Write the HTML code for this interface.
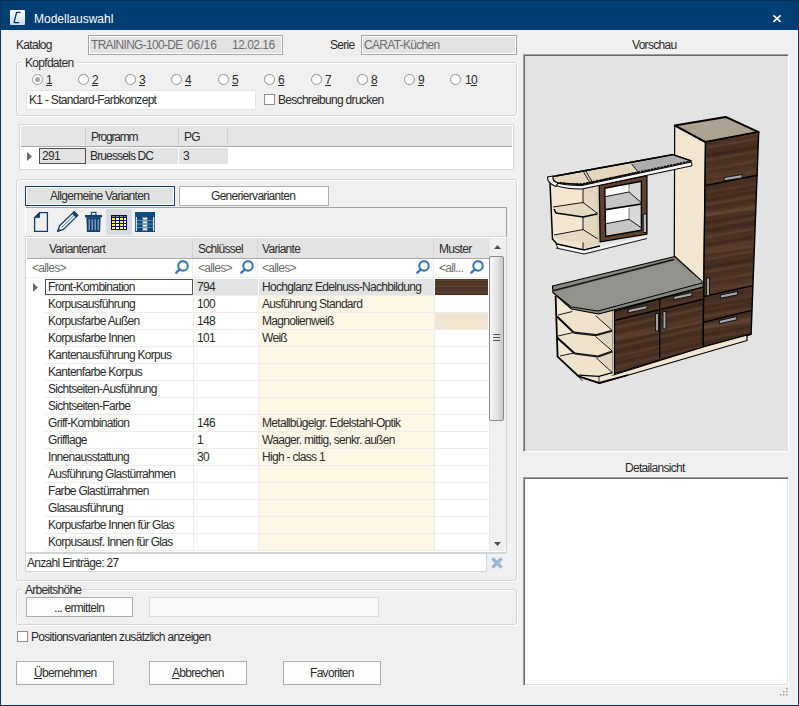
<!DOCTYPE html>
<html><head><meta charset="utf-8">
<style>
html,body{margin:0;padding:0}
body{width:799px;height:706px;overflow:hidden;background:#F0F0F0;position:relative;font-family:"Liberation Sans",sans-serif;font-size:11px;color:#2A2A2A}
div{position:absolute;box-sizing:border-box}
.t{white-space:nowrap;line-height:15px;letter-spacing:-0.7px;font-size:12px}
.g{color:#6D6D6D}
.u{text-decoration:underline}
.box3{background:#E3E3E3;border:1px solid #A5A5A5;box-shadow:inset 0 0 0 1px #fff}
.grp{border:1px solid #D5D5D5;border-radius:3px;box-shadow:inset 1px 1px 0 #fff, 1px 1px 0 #fff}
.radio{width:11px;height:11px;border:1px solid #8F8F8F;border-radius:50%;background:#fff}
.chk{width:11px;height:11px;border:1px solid #8F8F8F;background:#fff}
.btn{background:#FDFDFD;border:1px solid #ADADAD}
</style></head><body>
<!-- window frame -->
<div style="left:0;top:0;width:799px;height:30px;background:#013E74"></div>
<div style="left:0;top:0;width:799px;height:1px;background:#07304F"></div>
<div style="left:0;top:0;width:1px;height:706px;background:#0A3360"></div>
<div style="left:798px;top:0;width:1px;height:706px;background:#0A3360"></div>
<div style="left:0;top:705px;width:799px;height:1px;background:#0A3360"></div>
<!-- title icon -->
<div style="left:10px;top:10px;width:15px;height:15px;background:linear-gradient(#FFFFFF,#C9D9E6);border-radius:1px"></div>
<svg style="position:absolute;left:10px;top:10px" width="15" height="15" viewBox="0 0 15 15"><path d="M10.5 2.3 H6.6 L4.2 11.8 Q4 12.6 4.8 12.6 H9.2" fill="none" stroke="#0A2F5C" stroke-width="1.3"/></svg>
<div class="t" style="left:34px;top:12px;font-size:12px;letter-spacing:0;color:#fff;line-height:14px">Modellauswahl</div>
<svg style="position:absolute;left:772px;top:14px" width="10" height="10" viewBox="0 0 10 10"><path d="M1.4 1.3 L8.6 7.9 M8.6 1.3 L1.4 7.9" stroke="#fff" stroke-width="1.6"/></svg>

<!-- Katalog row -->
<div class="t" style="left:16px;top:38px">Katalog</div>
<div class="box3" style="left:88px;top:35px;width:195px;height:20px"></div>
<div class="t g" style="left:91px;top:38px">TRAINING-100-DE</div><div class="t g" style="left:187px;top:38px;letter-spacing:-0.05px">06/16</div><div class="t g" style="left:232px;top:38px;letter-spacing:-0.5px">12.02.16</div>
<div class="t" style="left:330px;top:38px">Serie</div>
<div class="box3" style="left:361px;top:35px;width:156px;height:20px"></div>
<div class="t g" style="left:364px;top:38px">CARAT-Küchen</div>

<!-- Kopfdaten group -->
<div class="grp" style="left:16px;top:62px;width:501px;height:54px"></div>
<div style="left:22px;top:56px;width:54px;height:12px;background:#F0F0F0"></div>
<div class="t" style="left:25px;top:56px">Kopfdaten</div>
<div class="radio" style="left:32px;top:74px;border-color:#9A9A9A"></div><div style="left:35px;top:77px;width:5px;height:5px;border-radius:50%;background:#A8A8A8"></div>
<div class="t u" style="left:46px;top:73px">1</div>
<div class="radio" style="left:78px;top:74px"></div>
<div class="t u" style="left:92px;top:73px">2</div>
<div class="radio" style="left:125px;top:74px"></div>
<div class="t u" style="left:139px;top:73px">3</div>
<div class="radio" style="left:171px;top:74px"></div>
<div class="t u" style="left:185px;top:73px">4</div>
<div class="radio" style="left:218px;top:74px"></div>
<div class="t u" style="left:232px;top:73px">5</div>
<div class="radio" style="left:264px;top:74px"></div>
<div class="t u" style="left:278px;top:73px">6</div>
<div class="radio" style="left:311px;top:74px"></div>
<div class="t u" style="left:325px;top:73px">7</div>
<div class="radio" style="left:357px;top:74px"></div>
<div class="t u" style="left:371px;top:73px">8</div>
<div class="radio" style="left:404px;top:74px"></div>
<div class="t u" style="left:418px;top:73px">9</div>
<div class="radio" style="left:450px;top:74px"></div>
<div class="t" style="left:465px;top:73px">1<span class="u">0</span></div>
<div style="left:26px;top:90px;width:230px;height:20px;background:#fff;border:1px solid #E3E3E3"></div>
<div class="t" style="left:29px;top:93px">K1 - Standard-Farbkonzept</div>
<div class="chk" style="left:264px;top:94px"></div>
<div class="t" style="left:278px;top:93px">Beschreibung drucken</div>

<!-- Programm grid -->
<div style="left:19px;top:124px;width:495px;height:46px;background:#fff;border:1px solid #D5D5D5"></div>
<div style="left:21px;top:126px;width:491px;height:21px;background:#E5E5E5;border-bottom:1px solid #A8A8A8"></div>
<div style="left:85px;top:127px;width:1px;height:18px;background:#D0D0D0"></div>
<div style="left:178px;top:127px;width:1px;height:18px;background:#D0D0D0"></div>
<div style="left:227px;top:127px;width:1px;height:18px;background:#D0D0D0"></div>
<div class="t" style="left:91px;top:130px;letter-spacing:-1.2px">Programm</div>
<div class="t" style="left:184px;top:130px">PG</div>
<svg style="position:absolute;left:27px;top:152px" width="6" height="10"><path d="M0 0 L5 4.5 L0 9Z" fill="#6D6D6D"/></svg>
<div style="left:39px;top:148px;width:47px;height:16px;background:#E3E3E3;border:1px solid #505050"></div>
<div style="left:86px;top:148px;width:92px;height:16px;background:#E3E3E3"></div>
<div style="left:179px;top:148px;width:49px;height:16px;background:#E3E3E3"></div>
<div class="t" style="left:42px;top:149px">291</div>
<div class="t" style="left:90px;top:149px;letter-spacing:-0.85px">Bruessels DC</div>
<div class="t" style="left:183px;top:149px">3</div>

<!-- Varianten group -->
<div class="grp" style="left:16px;top:179px;width:501px;height:402px"></div>
<div style="left:25px;top:186px;width:150px;height:20px;background:#E1E1E1;border:1px solid #053F73;box-shadow:inset 0 0 0 1px #fff"></div>
<div class="t" style="left:50px;top:189px">Allgemeine Varianten</div>
<div style="left:179px;top:186px;width:150px;height:20px;background:#fff;border:1px solid #ADADAD"></div>
<div class="t" style="left:211px;top:189px">Generiervarianten</div>
<!-- toolbar -->
<div style="left:25px;top:207px;width:482px;height:29px;background:#F0F0F0;border-top:1px solid #A0A0A0;border-right:1px solid #A0A0A0;border-left:1px solid #fff"></div>
<svg style="position:absolute;left:28px;top:206px" width="80" height="32" viewBox="28 206 80 32">
<path d="M39.6 212.6 H47.4 V231.3 H34.6 V217.6 Z" fill="#F0F0F0" stroke="#0E3D6E" stroke-width="1.3"/>
<path d="M34.6 217.6 L39.6 212.6 V217.6 Z" fill="#0E3D6E" stroke="#0E3D6E" stroke-width="0.8" stroke-linejoin="round"/>
<path d="M57.6 231.4 L63.4 229.4 L77.8 215.4 L74.2 211.6 L59.6 225.8 Z" fill="#F4F4F4" stroke="#0E3D6E" stroke-width="1.3" stroke-linejoin="round"/>
<path d="M75.9 217.6 L78.4 215.2 L74.3 211 L71.8 213.4Z" fill="#0E3D6E"/>
<path d="M61.5 227.5 L73.8 215.6" stroke="#0E3D6E" stroke-width="0.7"/>
<path d="M57.4 231.6 L58.4 228.2 L60.8 230.5Z" fill="#0E3D6E"/>
<rect x="85" y="215" width="17" height="2.4" fill="#0E3D6E"/>
<rect x="91.3" y="212.4" width="4.6" height="3" fill="#F0F0F0" stroke="#0E3D6E" stroke-width="1.1"/>
<path d="M86.4 217.2 H100.6 L100.1 231.9 H86.9 Z" fill="#0E3D6E"/>
<path d="M89.2 219.2 V230.2 M92.2 219.2 V230.2 M95.2 219.2 V230.2 M98.2 219.2 V230.2" stroke="#A7B6C6" stroke-width="1.1"/>
</svg>
<div style="left:106px;top:209px;width:26px;height:26px;background:#DADADA;border:1px solid #CCE4F7"></div>
<svg style="position:absolute;left:111px;top:215px" width="16" height="15" viewBox="0 0 16 15"><rect x="0" y="0" width="16" height="15" fill="#000080"/><g fill="#808080"><rect x="1" y="1" width="3" height="1"/><rect x="5" y="1" width="3" height="1"/><rect x="9" y="1" width="3" height="1"/><rect x="13" y="1" width="2" height="1"/></g><g fill="#FFFF00"><rect x="1" y="3" width="3" height="2"/><rect x="9" y="3" width="3" height="2"/><rect x="1" y="6" width="3" height="2"/><rect x="9" y="6" width="3" height="2"/><rect x="1" y="9" width="3" height="2"/><rect x="9" y="9" width="3" height="2"/><rect x="1" y="12" width="3" height="2"/><rect x="9" y="12" width="3" height="2"/></g><g fill="#fff"><rect x="5" y="3" width="3" height="2"/><rect x="13" y="3" width="2" height="2"/><rect x="5" y="6" width="3" height="2"/><rect x="13" y="6" width="2" height="2"/><rect x="5" y="9" width="3" height="2"/><rect x="13" y="9" width="2" height="2"/><rect x="5" y="12" width="3" height="2"/><rect x="13" y="12" width="2" height="2"/></g></svg>
<svg style="position:absolute;left:135px;top:212px" width="20" height="20" viewBox="0 0 20 20"><rect x="0" y="0" width="20" height="20" fill="#0F4A7C"/><g fill="#6489AC"><rect x="1" y="8" width="18" height="1"/><rect x="1" y="11.5" width="18" height="1"/><rect x="1" y="15" width="18" height="1"/></g><rect x="7.5" y="5" width="5" height="14" fill="#7E9CB8"/><g fill="#F2F5F8"><rect x="8" y="6" width="4" height="1.3"/><rect x="8" y="9.6" width="4" height="1.3"/><rect x="8" y="13" width="4" height="1.3"/><rect x="8" y="16.4" width="4" height="1.3"/></g><g fill="#fff"><rect x="0.8" y="5" width="1" height="14"/><rect x="18.2" y="5" width="1" height="14"/></g></svg>

<!-- variants grid -->
<div style="left:25px;top:236px;width:482px;height:318px;background:#fff;border:1px solid #D5D5D5;border-bottom:2px solid #D5D5D5"></div>
<div style="left:27px;top:238px;width:462px;height:21px;background:#E3E3E3;border-bottom:1px solid #A8A8A8"></div>
<div style="left:192px;top:239px;width:1px;height:19px;background:#D5D5D5"></div>
<div style="left:257px;top:239px;width:1px;height:19px;background:#D5D5D5"></div>
<div style="left:433px;top:239px;width:1px;height:19px;background:#D5D5D5"></div>
<div class="t" style="left:49px;top:242px">Variantenart</div>
<div class="t" style="left:198px;top:242px">Schlüssel</div>
<div class="t" style="left:262px;top:242px">Variante</div>
<div class="t" style="left:439px;top:242px">Muster</div>
<div class="t g" style="left:32px;top:261px">&lt;alles&gt;</div>
<div class="t g" style="left:198px;top:261px">&lt;alles&gt;</div>
<div class="t g" style="left:262px;top:261px">&lt;alles&gt;</div>
<div class="t g" style="left:439px;top:261px">&lt;all...</div>
<svg style="position:absolute;left:175px;top:260px" width="15" height="14" viewBox="0 0 15 14"><circle cx="8" cy="5.9" r="4.75" fill="none" stroke="#3A78B6" stroke-width="2.1"/><path d="M4.8 9.3 L1.3 12.7" stroke="#3A78B6" stroke-width="2.4" stroke-linecap="round"/></svg>
<svg style="position:absolute;left:240px;top:260px" width="15" height="14" viewBox="0 0 15 14"><circle cx="8" cy="5.9" r="4.75" fill="none" stroke="#3A78B6" stroke-width="2.1"/><path d="M4.8 9.3 L1.3 12.7" stroke="#3A78B6" stroke-width="2.4" stroke-linecap="round"/></svg>
<svg style="position:absolute;left:416px;top:260px" width="15" height="14" viewBox="0 0 15 14"><circle cx="8" cy="5.9" r="4.75" fill="none" stroke="#3A78B6" stroke-width="2.1"/><path d="M4.8 9.3 L1.3 12.7" stroke="#3A78B6" stroke-width="2.4" stroke-linecap="round"/></svg>
<svg style="position:absolute;left:470px;top:260px" width="15" height="14" viewBox="0 0 15 14"><circle cx="8" cy="5.9" r="4.75" fill="none" stroke="#3A78B6" stroke-width="2.1"/><path d="M4.8 9.3 L1.3 12.7" stroke="#3A78B6" stroke-width="2.4" stroke-linecap="round"/></svg>
<div style="left:192px;top:259px;width:1px;height:19px;background:#F0F0F0"></div>
<div style="left:257px;top:259px;width:1px;height:19px;background:#F0F0F0"></div>
<div style="left:433px;top:259px;width:1px;height:19px;background:#F0F0F0"></div>
<div style="left:27px;top:277px;width:462px;height:1px;background:#F0F0F0"></div>
<div style="left:258px;top:295px;width:176px;height:255px;background:#FFF7E6"></div>
<div style="left:45px;top:279px;width:148px;height:16px;background:#fff;border:1px solid #505050"></div>
<div style="left:194px;top:279px;width:64px;height:16px;background:#E3E3E3"></div>
<div style="left:259px;top:279px;width:175px;height:16px;background:#E3E3E3"></div>
<svg style="position:absolute;left:33px;top:283px" width="6" height="10"><path d="M0 0 L5 4.5 L0 9Z" fill="#6D6D6D"/></svg>
<div style="left:435px;top:279px;width:53px;height:16px;background:repeating-linear-gradient(180deg,#4E3526 0px,#5E4332 1.5px,#45301F 3px,#573C2A 4.5px,#4A3222 6px)"></div>
<div style="left:45px;top:295px;width:444px;height:1px;background:#EDEDED"></div>
<div class="t" style="left:48px;top:280px">Front-Kombination</div>
<div class="t" style="left:197px;top:280px">794</div>
<div class="t" style="left:262px;top:280px">Hochglanz Edelnuss-Nachbildung</div>
<div style="left:45px;top:312px;width:444px;height:1px;background:#EDEDED"></div>
<div class="t" style="left:48px;top:297px">Korpusausführung</div>
<div class="t" style="left:197px;top:297px">100</div>
<div class="t" style="left:262px;top:297px">Ausführung Standard</div>
<div style="left:435px;top:313px;width:53px;height:16px;background:#F2E6D3"></div>
<div style="left:45px;top:329px;width:444px;height:1px;background:#EDEDED"></div>
<div class="t" style="left:48px;top:314px">Korpusfarbe Außen</div>
<div class="t" style="left:197px;top:314px">148</div>
<div class="t" style="left:262px;top:314px">Magnolienweiß</div>
<div style="left:45px;top:346px;width:444px;height:1px;background:#EDEDED"></div>
<div class="t" style="left:48px;top:331px">Korpusfarbe Innen</div>
<div class="t" style="left:197px;top:331px">101</div>
<div class="t" style="left:262px;top:331px">Weiß</div>
<div style="left:45px;top:363px;width:444px;height:1px;background:#EDEDED"></div>
<div class="t" style="left:48px;top:348px">Kantenausführung Korpus</div>
<div style="left:45px;top:380px;width:444px;height:1px;background:#EDEDED"></div>
<div class="t" style="left:48px;top:365px">Kantenfarbe Korpus</div>
<div style="left:45px;top:397px;width:444px;height:1px;background:#EDEDED"></div>
<div class="t" style="left:48px;top:382px">Sichtseiten-Ausführung</div>
<div style="left:45px;top:414px;width:444px;height:1px;background:#EDEDED"></div>
<div class="t" style="left:48px;top:399px">Sichtseiten-Farbe</div>
<div style="left:45px;top:431px;width:444px;height:1px;background:#EDEDED"></div>
<div class="t" style="left:48px;top:416px">Griff-Kombination</div>
<div class="t" style="left:197px;top:416px">146</div>
<div class="t" style="left:262px;top:416px">Metallbügelgr. Edelstahl-Optik</div>
<div style="left:45px;top:448px;width:444px;height:1px;background:#EDEDED"></div>
<div class="t" style="left:48px;top:433px">Grifflage</div>
<div class="t" style="left:197px;top:433px">1</div>
<div class="t" style="left:262px;top:433px">Waager. mittig, senkr. außen</div>
<div style="left:45px;top:465px;width:444px;height:1px;background:#EDEDED"></div>
<div class="t" style="left:48px;top:450px">Innenausstattung</div>
<div class="t" style="left:197px;top:450px">30</div>
<div class="t" style="left:262px;top:450px">High - class 1</div>
<div style="left:45px;top:482px;width:444px;height:1px;background:#EDEDED"></div>
<div class="t" style="left:48px;top:467px">Ausführung Glastürrahmen</div>
<div style="left:45px;top:499px;width:444px;height:1px;background:#EDEDED"></div>
<div class="t" style="left:48px;top:484px">Farbe Glastürrahmen</div>
<div style="left:45px;top:516px;width:444px;height:1px;background:#EDEDED"></div>
<div class="t" style="left:48px;top:501px">Glasausführung</div>
<div style="left:45px;top:533px;width:444px;height:1px;background:#EDEDED"></div>
<div class="t" style="left:48px;top:518px">Korpusfarbe Innen für Glas</div>
<div style="left:45px;top:550px;width:444px;height:1px;background:#EDEDED"></div>
<div class="t" style="left:48px;top:535px">Korpusausf. Innen für Glas</div>
<div style="left:193px;top:295px;width:1px;height:255px;background:#EDEDED"></div>
<div style="left:258px;top:295px;width:1px;height:255px;background:#EDEDED"></div>
<div style="left:434px;top:295px;width:1px;height:255px;background:#EDEDED"></div>
<div style="left:489px;top:238px;width:17px;height:313px;background:#F0F0F0;border-left:1px solid #E8E8E8"></div>
<svg style="position:absolute;left:494px;top:245px" width="8" height="5"><path d="M0 4 L3.5 0 L7 4Z" fill="#505050"/></svg>
<svg style="position:absolute;left:494px;top:542px" width="8" height="5"><path d="M0 0 L7 0 L3.5 4Z" fill="#505050"/></svg>
<div style="left:489px;top:256px;width:15px;height:165px;border:1px solid #8A8A8A;border-radius:2px;background:linear-gradient(90deg,#F7F7F7,#E6E6E6 50%,#C8C8C8)"></div>
<div style="left:493px;top:334px;width:7px;height:1px;background:#555"></div><div style="left:493px;top:337px;width:7px;height:1px;background:#555"></div><div style="left:493px;top:340px;width:7px;height:1px;background:#555"></div>

<!-- Anzahl -->
<div style="left:25px;top:554px;width:462px;height:18px;background:#fff;border:1px solid #D5D5D5;border-top:0"></div>
<div class="t" style="left:27px;top:556px">Anzahl Einträge: 27</div>
<svg style="position:absolute;left:490px;top:556px" width="14" height="14" viewBox="0 0 14 14"><path d="M2.4 2.4 L11.6 11.6 M11.6 2.4 L2.4 11.6" stroke="#99B6D6" stroke-width="3.4"/></svg>

<!-- Arbeitshöhe -->
<div class="grp" style="left:16px;top:589px;width:501px;height:36px"></div>
<div style="left:22px;top:583px;width:60px;height:12px;background:#F0F0F0"></div>
<div class="t" style="left:25px;top:583px">Arbeitshöhe</div>
<div class="btn" style="left:26px;top:597px;width:107px;height:20px"></div>
<div class="t" style="left:54px;top:601px">... ermitteln</div>
<div style="left:149px;top:597px;width:230px;height:20px;background:#F9F9F9;border:1px solid #DADADA"></div>

<div class="chk" style="left:17px;top:631px"></div>
<div class="t" style="left:31px;top:630px">Positionsvarianten zusätzlich anzeigen</div>

<!-- buttons -->
<div class="btn" style="left:16px;top:661px;width:98px;height:24px"></div>
<div class="t" style="left:34px;top:666px"><span class="u">Ü</span>bernehmen</div>
<div class="btn" style="left:149px;top:661px;width:98px;height:24px"></div>
<div class="t" style="left:172px;top:666px"><span class="u">A</span>bbrechen</div>
<div class="btn" style="left:283px;top:661px;width:98px;height:24px"></div>
<div class="t" style="left:310px;top:666px">Favoriten</div>

<!-- preview -->
<div class="t" style="left:632px;top:38px">Vorschau</div>
<div style="left:523px;top:54px;width:266px;height:398px;background:#E3E3E3;border-top:1px solid #A0A0A0;border-left:1px solid #A0A0A0;border-right:1px solid #fff;border-bottom:1px solid #fff;box-shadow:inset 1px 1px 0 #696969"></div>
<svg style="position:absolute;left:525px;top:56px" width="263" height="395" viewBox="525 56 263 395">
<defs>
<linearGradient id="wg" x1="0" y1="0" x2="0" y2="1">
<stop offset="0" stop-color="#4A3022"/><stop offset="0.12" stop-color="#503425"/><stop offset="0.2" stop-color="#5E402E"/><stop offset="0.27" stop-color="#4A3022"/><stop offset="0.45" stop-color="#4E3324"/><stop offset="0.55" stop-color="#3E281B"/><stop offset="0.66" stop-color="#503425"/><stop offset="0.76" stop-color="#5C3E2C"/><stop offset="0.84" stop-color="#473021"/><stop offset="1" stop-color="#4A3022"/>
</linearGradient>
<linearGradient id="wg2" x1="0" y1="0" x2="0" y2="1">
<stop offset="0" stop-color="#000" stop-opacity="0"/><stop offset="0.3" stop-color="#8A6448" stop-opacity="0.35"/><stop offset="0.38" stop-color="#000" stop-opacity="0"/><stop offset="0.7" stop-color="#000" stop-opacity="0.12"/><stop offset="0.8" stop-color="#000" stop-opacity="0"/><stop offset="1" stop-color="#000" stop-opacity="0"/>
</linearGradient>
<pattern id="woodA" patternUnits="userSpaceOnUse" width="200" height="22" patternTransform="rotate(-10)">
<rect width="200" height="22" fill="url(#wg)"/>
</pattern>
<pattern id="woodB" patternUnits="userSpaceOnUse" width="200" height="37" patternTransform="rotate(-8) translate(0,5)">
<rect width="200" height="37" fill="url(#wg2)"/>
</pattern>
<pattern id="wood2A" patternUnits="userSpaceOnUse" width="200" height="19" patternTransform="rotate(-13) translate(0,7)">
<rect width="200" height="19" fill="url(#wg)"/>
</pattern>
<pattern id="wood2B" patternUnits="userSpaceOnUse" width="200" height="33" patternTransform="rotate(-11) translate(0,12)">
<rect width="200" height="33" fill="url(#wg2)"/>
</pattern>
</defs>
<g stroke="#000" stroke-linejoin="round">
<!-- tall cabinet -->
<polygon points="674.7,125.4 705.5,142.1 703,347 674,334" fill="#F3E6D0" stroke-width="1.2"/>
<polygon points="674.7,125.4 725.7,116.9 758.7,132.1 705.5,142.1" fill="#ADA292" stroke-width="2"/>
<polygon points="705.5,142.1 758.7,132.1 751.1,334.2 703,347" fill="url(#woodA)" stroke="none"/><polygon points="705.5,142.1 758.7,132.1 751.1,334.2 703,347" fill="url(#woodB)" stroke-width="1.4"/>
<path d="M705.5,185.7 L758,175 M703.5,296.5 L753,285.6 M703.5,322.3 L751.5,310.4" fill="none" stroke-width="1.3"/>
<!-- plinth -->
<polygon points="578,376 613.5,375 703,347 751,334 747,336 747,340.5 599.5,383.5" fill="#F3E6D0" stroke-width="1.2"/>

<!-- base shelf unit -->
<polygon points="553,292 614,311 614,374 599,382.8 578.6,376 557.6,357" fill="#F3E7D2" stroke="none"/>
<polygon points="595.6,311 613,311 613,374 598,374" fill="#E2D4BC" stroke="none"/>
<polygon points="558,356.5 571.6,352.2 595.6,354 612.3,372.6 599,376.4 578.6,375.2 557.6,357" fill="#F0E3CC" stroke="none"/>
<path d="M560,356 L574,353 M596,357.6 L612.3,372.6" fill="none" stroke-width="0.9"/>
<path d="M578.6,375.2 L599,376.4 L612.3,372.6" fill="none" stroke-width="1.2"/>
<polygon points="558,336 572.3,332.5 595.6,333 612.3,351 598,356.5 574.7,353.5 558,338" fill="#F0E3CC" stroke="none"/>
<path d="M558,336 L573,332.6 M595.6,336.6 L612.3,351" fill="none" stroke-width="0.9"/>
<path d="M557,337.5 L574.7,353.5" fill="none" stroke-width="2"/>
<path d="M574.7,353.5 L598,356.5 L612.3,351.5" fill="none" stroke-width="2.2" stroke="#1A1A1A"/>
<polygon points="558,315 572.3,311.5 595.6,312 612.1,330.3 595.6,335.2 573.8,332.6 558,317" fill="#F0E3CC" stroke="none"/>
<path d="M558,315 L572.3,311.5 M595.6,315.6 L612.1,330.3" fill="none" stroke-width="0.9"/>
<path d="M557,316.5 L573.8,332.6" fill="none" stroke-width="2"/>
<path d="M573.8,332.6 L595.6,335.2 L612.1,330.7" fill="none" stroke-width="2.2" stroke="#1A1A1A"/>
<path d="M578.6,376.4 L582.4,380.9 M599,376.4 L599,382.8" fill="none" stroke-width="0.8"/>
<path d="M555.6,296 L557.6,356.7 L578.6,376.4 L599,382.8 L628,375" fill="none" stroke-width="1.8"/>
<path d="M612.9,311 L612.9,374" fill="none" stroke="#555" stroke-width="0.8"/>
<path d="M614,311 L614,374" fill="none" stroke="#F8F0E0" stroke-width="1.5"/>
<!-- base doors -->
<polygon points="614.5,311 703.5,287 703,347 614.5,373.5" fill="url(#wood2A)" stroke="none"/><polygon points="614.5,311 703.5,287 703,347 614.5,373.5" fill="url(#wood2B)" stroke-width="1.3"/>
<path d="M615,320.4 L703,299.4 M659.7,299 L659.7,358" fill="none" stroke-width="1.4"/>
<!-- countertop -->
<polygon points="553,292.5 552.5,286 674.9,256.5 703.5,282.6 703,287 598.5,314 571.5,309" fill="#85887F" stroke-width="1.2"/>
<polygon points="553,292.5 674.9,261 703.5,282.6 598,311 571.5,307" fill="#8F938B" stroke="none"/>
<path d="M553,292.5 L571.5,307 L598,311 L703.5,282.6" fill="none" stroke-width="1"/>
<path d="M554,290.5 L674,259.5" fill="none" stroke="#151515" stroke-width="1.3"/>

<!-- upper shelf unit -->
<polygon points="550,183.5 600,185 600,243 582,249.8 560.3,245.2 552.5,239" fill="#F3E6D0" stroke="none"/>
<polygon points="583,186 599,184.5 599,244 583,249" fill="#E4D6BF" stroke="none"/>
<path d="M583,186 L583,249" fill="none" stroke-width="0.9"/>
<polygon points="553,207 583,202.5 598,213.7 583,216.5 555,212" fill="#E6D9C2" stroke="none"/>
<path d="M553,207 L583,202.5 L598,213.7" fill="none" stroke-width="0.9"/>
<path d="M554,209 L556,213 L583,217 L598,213.7" fill="none" stroke-width="1.6"/>
<polygon points="554,235 583,229.6 598,239 583,242.4 558,240" fill="#E6D9C2" stroke="none"/>
<path d="M554,235 L583,229.6 L598,239" fill="none" stroke-width="0.9"/>
<path d="M550,183.5 L552.5,239 L557,244 L584,250 L600,246" fill="none" stroke-width="1.5"/>
<path d="M556,246 L584,252 L646.9,236.5" fill="none" stroke="#F5F5F5" stroke-width="2.2"/>
<path d="M556,248 L584,254 L647,238.5 M556,244 L558,248" fill="none" stroke-width="0.9"/>
<path d="M598,186 L598,244" fill="none" stroke="#BFB39F" stroke-width="0.8"/>
<!-- glass cabinet -->
<polygon points="599.3,185 646.9,175.7 646.9,234.1 600.1,241.9" fill="#62432F" stroke-width="1.3"/>
<polygon points="604.8,188.2 641.4,181.2 641.4,230.2 605.6,236.5" fill="#FFFFFF" stroke="none"/>
<polygon points="629,183.5 641.4,181.2 641.4,230.2 629,227" fill="#D8D8D8" stroke="none"/>
<polygon points="605.4,196.6 629,192 641.4,202.8 641.4,204 605.6,209.5" fill="#C6C6C6" stroke="none"/>
<path d="M605.4,196.6 L629,192 L641.4,202.8" fill="none" stroke-width="0.9"/>
<path d="M605.6,209.6 L641.4,204" fill="none" stroke-width="1.6"/>
<polygon points="605.6,223.8 629,219.3 641.4,227.8 641.4,230.2 605.6,236.5" fill="#C6C6C6" stroke="none"/>
<path d="M605.6,223.8 L629,219.3 L641.4,227.8" fill="none" stroke-width="0.9"/>
<path d="M629,183.5 L629,192 M629,208 L629,219.3" fill="none" stroke="#333" stroke-width="0.6"/>
<polygon points="604.8,188.2 641.4,181.2 641.4,230.2 605.6,236.5" fill="none" stroke-width="1.4"/>
<rect x="643.2" y="214" width="3.4" height="18.5" fill="#B8B8B8" stroke-width="0.9"/>
<!-- cornice strip -->
<polygon points="548,177.5 555.6,176 672.6,154.7 691.2,160.9 582,184.5 557,183" fill="#E3D5BE" stroke-width="1.4"/>
<polygon points="631.5,163.9 672.6,154.7 691.2,160.9 638.5,172.3" fill="#ADADAD" stroke="none"/>
<path d="M555.6,176 L672.6,154.7 L691.2,160.9" fill="none" stroke-width="1.4"/>
<path d="M631.5,163.9 L638.5,172.3 M583,171 L590,182.8 M585.5,170.5 L592.5,182.4" fill="none" stroke-width="0.9"/>
<path d="M557,183 Q566,185.5 582,185.5 L691.5,162 L692,165.8 L582,189 Q565,189 556,185.5 Z" fill="#F6F6F6" stroke-width="1"/>
<path d="M560,182.5 Q568,184.2 582,184 L690.5,161" fill="none" stroke="#111" stroke-width="1.5" stroke-dasharray="2.2 1.1"/>
<path d="M547.5,177 Q547,183 556,186.5 L558,183 Q552,181 553,176 Z" fill="#F2F2F2" stroke="#000" stroke-width="1.1"/>
</g>
<!-- handles -->
<g fill="#A8A8A8" stroke="#1A1A1A" stroke-width="1.1">
<polygon points="724.3,177.5 742.2,174.5 742.2,177.8 724.3,180.8"/>
<rect x="706.5" y="278" width="3" height="17.5"/>
<polygon points="720.4,295 737.6,291.5 737.6,294.8 720.4,298.3"/>
<polygon points="719.4,320.5 736.8,316.5 736.8,319.8 719.4,323.8"/>
<polygon points="673.7,296.5 692,292.5 692,295.8 673.7,299.8"/>
<polygon points="628.3,309.5 647.1,305.5 647.1,308.8 628.3,312.8"/>
<rect x="655.5" y="313.5" width="3" height="17.5"/>
<rect x="663" y="311.5" width="3" height="17.5"/>
</g>
</svg>

<div class="t" style="left:625px;top:461px">Detailansicht</div>
<div style="left:523px;top:477px;width:266px;height:209px;background:#fff;border-top:1px solid #A0A0A0;border-left:1px solid #A0A0A0;border-right:1px solid #fff;border-bottom:1px solid #fff;box-shadow:inset 1px 1px 0 #696969, inset -1px -1px 0 #E3E3E3"></div>
<!-- grip -->
<svg style="position:absolute;left:780px;top:687px" width="10" height="10"><g fill="#A0A0A0"><rect x="6" y="1" width="1.5" height="1.5"/><rect x="3" y="4" width="1.5" height="1.5"/><rect x="6" y="4" width="1.5" height="1.5"/><rect x="0" y="7" width="1.5" height="1.5"/><rect x="3" y="7" width="1.5" height="1.5"/><rect x="6" y="7" width="1.5" height="1.5"/></g></svg>
</body></html>
